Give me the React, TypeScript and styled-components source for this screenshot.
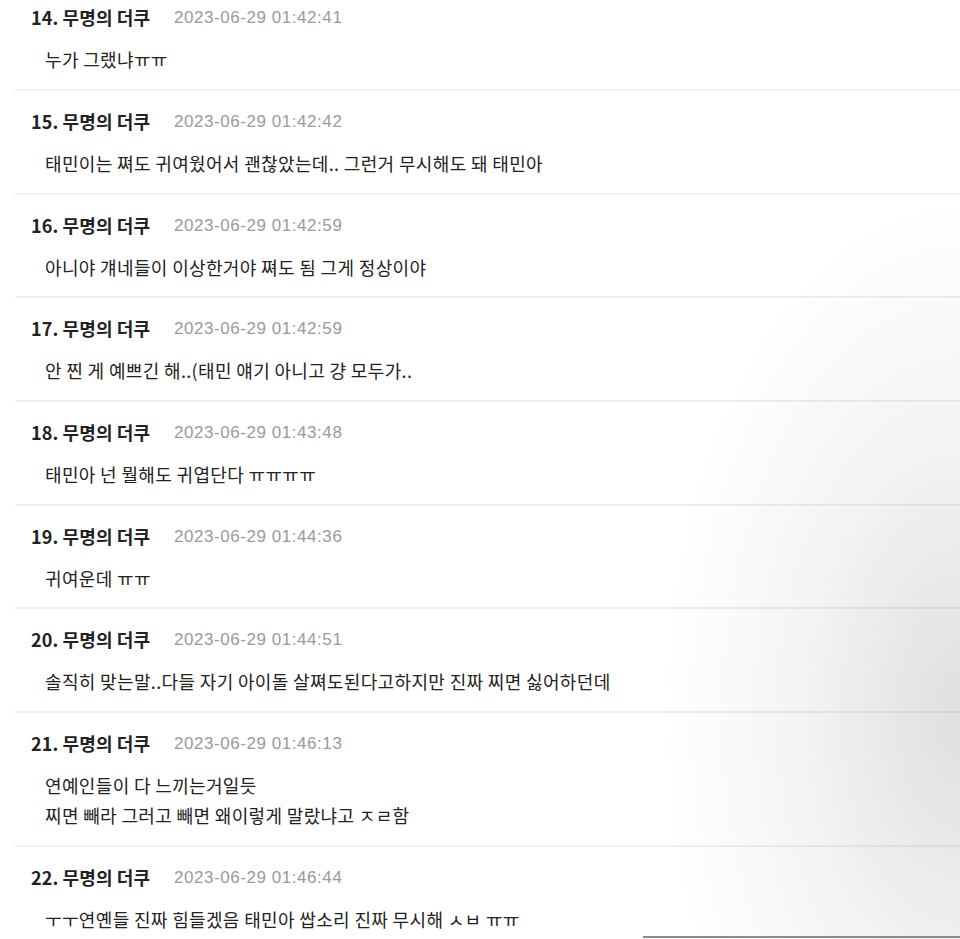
import React from "react";
import styled, { createGlobalStyle } from "styled-components";

const GlobalStyle = createGlobalStyle`
  html, body {
    margin: 0;
    padding: 0;
    background: #ffffff;
  }
  body {
    font-family: "Noto Sans CJK KR", "Noto Sans", sans-serif;
    color: #222222;
    overflow: hidden;
  }
`;

const Page = styled.div`
  position: relative;
  width: 960px;
  height: 939px;
  overflow: hidden;
  background: #ffffff;
`;

const List = styled.ul`
  list-style: none;
  margin: -12.7px 0 0 15px;
  padding: 0;
`;

const Item = styled.li`
  display: flex;
  flex-direction: column;
  gap: 15px;
  padding: 18px 0 14.7px 16px;
  border-bottom: 2px solid #efefef;
`;

const Header = styled.div`
  display: flex;
  align-items: center;
  gap: 24px;
  height: 24px;
`;

const Name = styled.span`
  font-size: 18px;
  font-weight: 700;
  color: #222222;
  letter-spacing: 0.1px;
`;

const DateText = styled.span`
  font-family: "Liberation Sans", Arial, sans-serif;
  font-size: 17px;
  line-height: 24px;
  padding-top: 2px;
  font-weight: 400;
  color: #9a9a9a;
  letter-spacing: 0.55px;
`;

const Body = styled.div`
  padding-left: 14px;
  font-size: 18px;
  line-height: 30px;
  letter-spacing: 0.35px;
  color: #222222;
`;

const Line = styled.div`
  white-space: nowrap;
`;

const Shade = styled.div`
  position: absolute;
  inset: 0;
  pointer-events: none;
  background:
    radial-gradient(ellipse 300px 520px at 100% 76%, rgba(0, 0, 0, 0.125), rgba(0, 0, 0, 0.045) 55%, rgba(0, 0, 0, 0) 100%);
`;

const EdgeBar = styled.div`
  position: absolute;
  left: 643px;
  right: 0;
  bottom: 1px;
  height: 2px;
  background: #8c8c8c;
`;

type Comment = { no: number; date: string; lines: string[] };

const comments: Comment[] = [
  { no: 14, date: "2023-06-29 01:42:41", lines: ["누가 그랬냐ㅠㅠ"] },
  { no: 15, date: "2023-06-29 01:42:42", lines: ["태민이는 쪄도 귀여웠어서 괜찮았는데.. 그런거 무시해도 돼 태민아"] },
  { no: 16, date: "2023-06-29 01:42:59", lines: ["아니야 걔네들이 이상한거야 쪄도 됨 그게 정상이야"] },
  { no: 17, date: "2023-06-29 01:42:59", lines: ["안 찐 게 예쁘긴 해..(태민 얘기 아니고 걍 모두가.."] },
  { no: 18, date: "2023-06-29 01:43:48", lines: ["태민아 넌 뭘해도 귀엽단다 ㅠㅠㅠㅠ"] },
  { no: 19, date: "2023-06-29 01:44:36", lines: ["귀여운데 ㅠㅠ"] },
  { no: 20, date: "2023-06-29 01:44:51", lines: ["솔직히 맞는말..다들 자기 아이돌 살쪄도된다고하지만 진짜 찌면 싫어하던데"] },
  { no: 21, date: "2023-06-29 01:46:13", lines: ["연예인들이 다 느끼는거일듯", "찌면 빼라 그러고 빼면 왜이렇게 말랐냐고 ㅈㄹ함"] },
  { no: 22, date: "2023-06-29 01:46:44", lines: ["ㅜㅜ연옌들 진짜 힘들겠음 태민아 쌉소리 진짜 무시해 ㅅㅂ ㅠㅠ"] },
];

export default function App() {
  return (
    <Page>
      <GlobalStyle />
      <List>
        {comments.map((c) => (
          <Item key={c.no}>
            <Header>
              <Name>{c.no}. 무명의 더쿠</Name>
              <DateText>{c.date}</DateText>
            </Header>
            <Body>
              {c.lines.map((l, i) => (
                <Line key={i}>{l}</Line>
              ))}
            </Body>
          </Item>
        ))}
      </List>
      <Shade />
      <EdgeBar />
    </Page>
  );
}
